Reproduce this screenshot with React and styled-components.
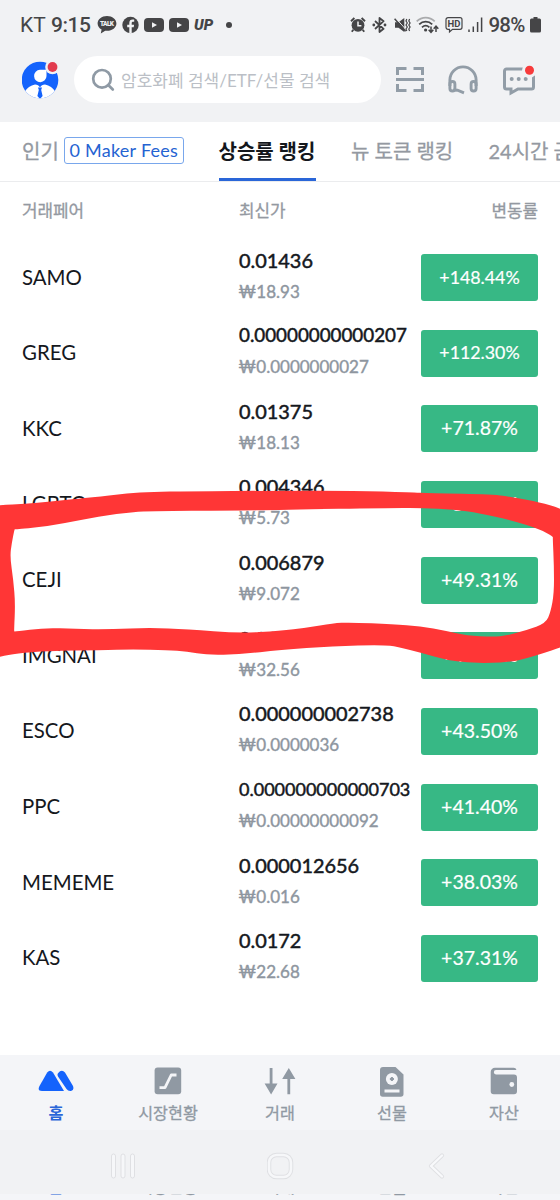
import React, { useState } from 'react'
import styled, { createGlobalStyle } from 'styled-components'

const coins = [
  { name: 'SAMO', price: '0.01436', krw: '18.93', change: '+148.44%' },
  { name: 'GREG', price: '0.00000000000207', krw: '0.0000000027', change: '+112.30%' },
  { name: 'KKC', price: '0.01375', krw: '18.13', change: '+71.87%' },
  { name: 'LGBTQ', price: '0.004346', krw: '5.73', change: '+50.32%' },
  { name: 'CEJI', price: '0.006879', krw: '9.072', change: '+49.31%' },
  { name: 'IMGNAI', price: '0.02469', krw: '32.56', change: '+45.12%' },
  { name: 'ESCO', price: '0.000000002738', krw: '0.0000036', change: '+43.50%' },
  { name: 'PPC', price: '0.000000000000703', krw: '0.00000000092', change: '+41.40%' },
  { name: 'MEMEME', price: '0.000012656', krw: '0.016', change: '+38.03%' },
  { name: 'KAS', price: '0.0172', krw: '22.68', change: '+37.31%' },
]

// ! long prices get a smaller font so they stay inside the column
const priceSize = (price) => {
  if (price.length > 16) return 18
  if (price.length > 14) return 18.8
  return 19.9
}

// ! status bar icons
const TalkIcon = () => (
  <svg width="20" height="20" viewBox="0 0 20 20">
    <path d="M10 1C4.700 1 .6 4.300 .6 8.500c0 2.600 1.600 4.800 4 6.100L3.800 18.500l4.400-2.800c.6.100 1.200.1 1.800.1 5.300 0 9.400-3.200 9.400-7.300S15.300 1 10 1z" fill="#454547" />
    <text x="10" y="11" textAnchor="middle" textLength="14" fontSize="6.500" fontWeight="900" fontFamily="Roboto, sans-serif" fill="#f1f2f4">TALK</text>
  </svg>
)

const FacebookIcon = () => (
  <svg width="17" height="18" viewBox="0 0 17 18">
    <circle cx="8.500" cy="9" r="8.200" fill="#454547" />
    <path d="M7.300 17.500V11.200H5.200V8.700h2.100V7c0-2.300 1.300-3.400 3.300-3.400.9 0 1.600.1 1.600.1v2.100h-1.100c-1.100 0-1.400.6-1.400 1.300v1.600h2.400l-.4 2.500h-2v6.300z" fill="#f1f2f4" />
  </svg>
)

const YoutubeIcon = () => (
  <svg width="20" height="16" viewBox="0 0 20 16">
    <rect x="0" y="1" width="20" height="14" rx="4" fill="#454547" />
    <path d="M8 5.200v5.600l5-2.800z" fill="#f1f2f4" />
  </svg>
)

const AlarmIcon = () => (
  <svg width="16" height="18" viewBox="0 0 16 18">
    <circle cx="8" cy="9.300" r="6.400" fill="#454547" />
    <path d="M1 5.200L4.400 2M15 5.200L11.600 2M3.300 13.800l-1.500 2M12.700 13.800l1.500 2" stroke="#454547" strokeWidth="1.900" />
    <path d="M8 5.600v4.200h3.400" stroke="#f1f2f4" strokeWidth="1.500" fill="none" />
  </svg>
)

const BluetoothIcon = () => (
  <svg width="17" height="18" viewBox="-1 0 17 18">
    <path d="M3 5l8.600 7.800L7.500 16V2l4.100 3.200L3 13" stroke="#454547" strokeWidth="1.800" fill="none" strokeLinejoin="round" />
    <circle cx="1.800" cy="9" r="1.400" fill="#454547" />
    <circle cx="13" cy="9" r="1.400" fill="#454547" />
  </svg>
)

const MuteIcon = () => (
  <svg width="17" height="18" viewBox="0 0 17 18">
    <path d="M1 6.200h3.500L10.300 2v14L4.500 11.800H1z" fill="#454547" />
    <path d="M1.500 1.800l11 12.500" stroke="#f1f2f4" strokeWidth="1" />
    <path d="M.6 2.800l11 12.500" stroke="#454547" strokeWidth="1.500" />
    <path d="M12.800 3l-.8 2 1.300 2-1.300 2 1.300 2-1.300 2 .8 2M15.600 3l-.8 2 1.300 2-1.300 2 1.300 2-1.300 2 .8 2" stroke="#454547" strokeWidth="1.200" fill="none" />
  </svg>
)

const WifiIcon = () => (
  <svg width="23" height="18" viewBox="0 0 23 18">
    <path d="M.7 5.300C5.800.3 13.600.3 18.700 5.300" stroke="#aaabad" strokeWidth="1.700" fill="none" />
    <path d="M3.200 8.300c3.700-3.500 9.300-3.500 13 0M6 11.300c2.200-2 5.200-2 7.400 0" stroke="#454547" strokeWidth="1.800" fill="none" />
    <circle cx="9.600" cy="14" r="1.600" fill="#454547" />
    <path d="M15 10.500v5.500M12.700 13.700l2.300 2.600 2.300-2.600M20 16v-5.500M17.700 12.800l2.300-2.600 2.300 2.600" stroke="#454547" strokeWidth="1.500" fill="none" />
  </svg>
)

const HdIcon = () => (
  <svg width="18" height="18" viewBox="0 0 18 18">
    <path d="M3 1.700h12a2 2 0 0 1 2 2v7.600a2 2 0 0 1-2 2H7.500L4.500 16v-2.700H3a2 2 0 0 1-2-2V3.700a2 2 0 0 1 2-2z" stroke="#454547" strokeWidth="1.200" fill="none" />
    <text x="9" y="11" textAnchor="middle" textLength="13" fontSize="9.500" fontWeight="700" fontFamily="Roboto, sans-serif" fill="#454547">HD</text>
  </svg>
)

const SignalIcon = () => (
  <svg width="15" height="18" viewBox="0 0 15 18">
    <path d="M1 13.500V16M5.300 10.500V16M9.600 6V16M13.600 1.500V16" stroke="#454547" strokeWidth="1.500" />
  </svg>
)

const BatteryIcon = () => (
  <svg width="11" height="18" viewBox="0 0 11 18">
    <path d="M3.500 1h4v1.600h2a1.500 1.500 0 0 1 1.500 1.500v11a1.500 1.500 0 0 1-1.500 1.500h-8A1.500 1.500 0 0 1 0 15.100v-11a1.500 1.500 0 0 1 1.500-1.500h2z" fill="#454547" />
  </svg>
)

// ! header icons
const AvatarIcon = () => (
  <svg width="38" height="38" viewBox="0 0 38 38">
    <defs>
      <clipPath id="avatar">
        <circle cx="18" cy="19" r="18.300" />
      </clipPath>
    </defs>
    <g clipPath="url(#avatar)">
      <rect width="38" height="38" fill="#1463fc" />
      <path d="M2 38V31.500Q6.500 24.500 13 23.500Q16.500 23.500 18 26.500Q19.500 23.500 23 23.500Q29.500 24.500 34 31.500V38z" fill="#fff" />
      <path d="M16 26.500h4l-.8 2.500 1.400 6-2.600 3-2.600-3 1.400-6z" fill="#1463fc" />
    </g>
    <path d="M18 8.800H24.500V15A6.200 6.200 0 1 1 18 8.800z" fill="#fff" />
    <circle cx="30.500" cy="6" r="7.300" fill="#f1f2f4" />
    <circle cx="30.500" cy="6" r="4.900" fill="#e23b4e" />
  </svg>
)

const SearchIcon = () => (
  <svg width="24" height="24" viewBox="0 0 24 24" fill="none" stroke="#8f9aa5" strokeWidth="2.700" strokeLinecap="round">
    <circle cx="11" cy="10.800" r="8.800" />
    <path d="M17.500 17.200l4.300 4.300" />
  </svg>
)

const ScanIcon = () => (
  <svg width="28" height="27" viewBox="0 0 28 27" fill="none" stroke="#929da7" strokeWidth="3">
    <path d="M1.500 9V2.500h9M17.500 2.500h9V9M1.500 18v6.500h9M17.500 24.500h9V18M0 13.500h28" />
  </svg>
)

const HeadsetIcon = () => (
  <svg width="30" height="30" viewBox="0 0 30 30" fill="none" stroke="#929da7" strokeWidth="2.900">
    <path d="M1.900 21V15a13.100 13.100 0 0 1 26.200 0v6" />
    <rect x="1.900" y="16.500" width="5" height="9.500" rx="2.500" />
    <rect x="23.100" y="16.500" width="5" height="9.500" rx="2.500" />
    <path d="M5.500 25l4 .2 6.500 2.600" />
  </svg>
)

const MessageIcon = () => (
  <svg width="34" height="32" viewBox="0 0 34 32">
    <path d="M4.500 5h25a2 2 0 0 1 2 2v16a2 2 0 0 1-2 2H16l-7 4V25H4.500a2 2 0 0 1-2-2V7a2 2 0 0 1 2-2z" fill="none" stroke="#929da7" strokeWidth="3" />
    <g fill="#929da7">
      <circle cx="9.700" cy="15" r="2" />
      <circle cx="16.700" cy="15" r="2" />
      <circle cx="23.700" cy="15" r="2" />
    </g>
    <circle cx="27.500" cy="6.300" r="7.500" fill="#f1f2f4" />
    <circle cx="27.500" cy="6.300" r="4.500" fill="#f73b3b" />
  </svg>
)

// ! bottom menu icons
const HomeIcon = () => (
  <svg width="36" height="30" viewBox="0 0 36 30" fill="#1463fc">
    <path d="M9.200 6.600Q12 3 15 6.600L26 25H4Q-1 25 1.500 20z" />
    <path d="M20 7.300Q23.700 2.800 27 6.600L35 20q1.500 4-2 5-3 .3-4.500-2L20 10.500q-1-1.700 0-3.200z" />
  </svg>
)

const MarketIcon = () => (
  <svg width="28" height="30" viewBox="0 0 28 30">
    <rect x=".6" y="1.600" width="26.600" height="26.600" rx="3" fill="#9099a3" />
    <path d="M5.500 21.600H11L17.200 9H22.500" fill="none" stroke="#f4f5f8" strokeWidth="2.800" strokeLinejoin="round" />
  </svg>
)

const TradeIcon = () => (
  <svg width="32" height="30" viewBox="0 0 32 30" fill="#9099a3">
    <path d="M5.700 2h2.800v15.500h5L7.100 28.400 .6 17.500h5.100zM23.400 28.200h2.800V13h5.200L24.800 2 18.200 13h5.200z" />
  </svg>
)

const FuturesIcon = () => (
  <svg width="26" height="32" viewBox="0 0 26 32">
    <path d="M4 1h12.500l8 7.500V28a2.700 2.700 0 0 1-2.700 2.700H3.700A2.700 2.700 0 0 1 1 28V4a3 3 0 0 1 3-3z" fill="#9099a3" />
    <circle cx="12.900" cy="13" r="6" fill="#f4f5f8" />
    <path d="M12.900 11l2 2-2 2-2-2z" fill="#9099a3" stroke="#9099a3" strokeLinejoin="round" />
    <path d="M5.500 25h15" stroke="#f4f5f8" strokeWidth="3" />
  </svg>
)

const WalletIcon = () => (
  <svg width="28" height="30" viewBox="0 0 28 30">
    <path d="M5 1.800h18.500a3 3 0 0 1 3 2.300H6a1.900 1.900 0 0 0 0 4.300h18a3 3 0 0 1 3 3v13.800a3 3 0 0 1-3 3H3.700a3 3 0 0 1-3-3V6a4.200 4.200 0 0 1 4.300-4.200z" fill="#9099a3" />
    <circle cx="21.800" cy="18.500" r="2.400" fill="#f4f5f8" />
  </svg>
)

const menus = [
  { label: '홈', Icon: HomeIcon },
  { label: '시장현황', Icon: MarketIcon },
  { label: '거래', Icon: TradeIcon },
  { label: '선물', Icon: FuturesIcon },
  { label: '자산', Icon: WalletIcon },
]

// ! hand drawn circle around one row of the list
const outerLine = [
  [-20, 28], [0, 25], [25, 24], [50, 21.7], [80, 18.5], [100, 16.5], [127, 13.5], [153, 11.7], [187, 11.3], [280, 10.7],
  [355, 10.7], [410, 12.3], [430, 13.2], [493, 14.2], [513, 17.3], [540, 22.3], [560, 28.3], [580, 38],
  [580, 160], [560, 167.7], [543, 173.3], [527, 178.3], [510, 182], [490, 183], [467, 182.7], [447, 180],
  [423, 173.3], [397, 166.7], [383, 165], [333, 166], [280, 170], [240, 174.3], [207, 175], [187, 171.7],
  [167, 170], [133, 169.3], [100, 170], [47, 171], [17, 173.3], [0, 176.7], [-20, 182],
]

const innerLine = [
  [14.5, 49.3], [15, 49.3], [50, 46], [80, 40], [117, 33.3], [150, 31], [233, 30.7], [280, 30], [397, 27.7], [423, 28.3],
  [453, 29.3], [480, 33.3], [513, 40.7], [540, 49.3], [553, 56.7], [552.7, 57.5], [554, 86.7], [554, 113.3],
  [550.7, 131.7], [545.7, 143.3], [526.7, 150], [506.7, 155.7], [493.3, 156.7], [466.7, 155.7], [446.7, 151],
  [420, 146], [393, 144.3], [350, 142.3], [333, 143.3], [307, 147.7], [280, 150.7], [240, 153.3], [187, 149.3],
  [150, 147.7], [110, 149.3], [75, 149], [45, 147.7], [14.5, 151.7], [14, 151], [15.3, 123.3], [13.3, 100], [10, 76.7], [11.7, 63.3],
]

// curve through the middle of every two points
const smooth = (points) => {
  const last = points[points.length - 1]
  const start = [(last[0] + points[0][0]) / 2, (last[1] + points[0][1]) / 2]
  const curves = points.map(([x, y], i) => {
    const next = points[(i + 1) % points.length]
    return `Q${x} ${y} ${(x + next[0]) / 2} ${(y + next[1]) / 2}`
  })
  return `M${start[0]} ${start[1]}${curves.join('')}Z`
}

const Marker = () => (
  <MarkerStyled width="560" height="190" viewBox="0 0 560 190">
    <path fillRule="evenodd" fill="#ff3636" d={smooth(outerLine) + smooth(innerLine)} />
  </MarkerStyled>
)

const App = () => {
  const [active, setActive] = useState('홈')

  const renderCoins = () => {
    return coins.map((coin, i) => {
      return (
        <Row key={i}>
          <Name>{coin.name}</Name>
          <PriceBox>
            <Price $size={priceSize(coin.price)}>{coin.price}</Price>
            <Krw>₩<span>{coin.krw}</span></Krw>
          </PriceBox>
          <Change $small={coin.change.length > 7}>{coin.change}</Change>
        </Row>
      )
    })
  }

  return (
    <>
      <GlobalStyle />
      <Screen>
        <StatusBar>
          <StatusGroup>
            <Carrier>KT</Carrier>
            <Clock>9:15</Clock>
            <TalkIcon />
            <FacebookIcon />
            <YoutubeIcon />
            <YoutubeIcon />
            <UpMark>UP</UpMark>
            <Dot />
          </StatusGroup>
          <StatusGroup $right>
            <AlarmIcon />
            <BluetoothIcon />
            <MuteIcon />
            <WifiIcon />
            <HdIcon />
            <SignalIcon />
            <Percent>98%</Percent>
            <BatteryIcon />
          </StatusGroup>
        </StatusBar>

        <Header>
          <AvatarIcon />
          <SearchBox>
            <SearchIcon />
            <span>암호화폐 검색/ETF/선물 검색</span>
          </SearchBox>
          <HeaderIcons>
            <ScanIcon />
            <HeadsetIcon />
            <MessageIcon />
          </HeaderIcons>
        </Header>

        <Tabs>
          <Tab $width={161}>인기<Fee>0 Maker Fees</Fee></Tab>
          <Tab $width={97} $active>상승률 랭킹</Tab>
          <Tab $width={102}>뉴 토큰 랭킹</Tab>
          <Tab $width={160}>24시간 금액</Tab>
        </Tabs>

        <ListHead>
          <span>거래페어</span>
          <span>최신가</span>
          <span>변동률</span>
        </ListHead>

        <List>
          {renderCoins()}
          <Marker />
        </List>

        <Menu>
          {menus.map(({ label, Icon }) => (
            <MenuItem key={label} onClick={() => setActive(label)}>
              <Icon />
              <MenuLabel $active={active === label}>{label}</MenuLabel>
            </MenuItem>
          ))}
        </Menu>

        <SystemBar>
          <svg width="26" height="28" viewBox="0 0 26 28" fill="#f6f7f9" stroke="#dfe0e3">
            <rect x="1.500" y="2" width="4" height="24" rx="2" />
            <rect x="11" y="2" width="4" height="24" rx="2" />
            <rect x="20.500" y="2" width="4" height="24" rx="2" />
          </svg>
          <svg width="28" height="28" viewBox="0 0 28 28" fill="none">
            <rect x="2" y="3" width="22" height="22" rx="7.500" stroke="#dfe0e3" strokeWidth="4.500" />
            <rect x="2" y="3" width="22" height="22" rx="7.500" stroke="#f6f7f9" strokeWidth="2.600" />
          </svg>
          <svg width="20" height="28" viewBox="0 0 20 28" fill="none" strokeLinecap="round" strokeLinejoin="round">
            <path d="M16 3.500L5 14l11 10.500" stroke="#dfe0e3" strokeWidth="4.200" />
            <path d="M16 3.500L5 14l11 10.500" stroke="#f8f9fb" strokeWidth="2.400" />
          </svg>
        </SystemBar>

        <MenuEdge>
          {menus.map(({ label }) => (
            <MenuItem key={label}>
              <MenuLabel $active={active === label}>{label}</MenuLabel>
            </MenuItem>
          ))}
        </MenuEdge>
      </Screen>
    </>
  )
}

const GlobalStyle = createGlobalStyle`
  * {
    box-sizing: border-box;
  }

  body {
    margin: 0;
    background: #fff;
  }

  svg {
    display: block;
    flex-shrink: 0;
  }
`

const Screen = styled.div`
  width: 560px;
  height: 1200px;
  display: flex;
  flex-direction: column;
  overflow: hidden;
  background: #fff;
  font-family: Lato, 'Noto Sans CJK KR', sans-serif;
`

const StatusBar = styled.div`
  height: 50px;
  flex-shrink: 0;
  padding: 0 19px 0 20px;
  display: flex;
  justify-content: space-between;
  background: #f1f2f4;
  color: #454547;
  font-family: Roboto, sans-serif;
`

const StatusGroup = styled.div`
  display: flex;
  align-items: center;
  gap: ${({ $right }) => ($right ? '5.5px' : '5px')};
`

const Carrier = styled.span`
  width: 26px;
  font-size: 21px;
`

const Clock = styled.span`
  width: 41px;
  font-size: 21px;
  font-weight: 500;
  letter-spacing: -.5px;
`

const UpMark = styled.span`
  width: 22px;
  font-size: 15px;
  font-weight: 900;
  font-style: italic;
`

const Dot = styled.i`
  width: 6px;
  height: 6px;
  margin-left: 5px;
  border-radius: 50%;
  background: #454547;
`

const Percent = styled.span`
  width: 36px;
  font-size: 20.5px;
  font-weight: 500;
  letter-spacing: -.8px;
`

const Header = styled.div`
  height: 72px;
  flex-shrink: 0;
  padding: 0 24px 13px 22px;
  display: flex;
  align-items: center;
  background: #f1f2f4;
`

const SearchBox = styled.div`
  width: 307px;
  height: 47px;
  margin-left: 14px;
  padding-left: 17px;
  display: flex;
  align-items: center;
  gap: 6px;
  border-radius: 24px;
  background: #fff;
  color: #bbbfc6;
  font-size: 17px;
  white-space: nowrap;
`

const HeaderIcons = styled.div`
  flex: 1;
  margin-left: 15px;
  display: flex;
  align-items: center;
  justify-content: space-between;
`

const Tabs = styled.div`
  height: 60px;
  flex-shrink: 0;
  padding-left: 22px;
  display: flex;
  gap: 35.5px;
  border-bottom: 1px solid #ebecee;
  overflow: hidden;
`

const Tab = styled.div`
  width: ${({ $width }) => $width}px;
  height: 59px;
  flex-shrink: 0;
  display: flex;
  align-items: center;
  white-space: nowrap;
  font-size: 20px;
  font-weight: ${({ $active }) => ($active ? 700 : 400)};
  color: ${({ $active }) => ($active ? '#14171c' : '#9499a1')};
  -webkit-text-stroke: ${({ $active }) => ($active ? 0 : '.3px')};
  border-bottom: 3px solid ${({ $active }) => ($active ? '#2a66d8' : 'transparent')};
`

const Fee = styled.span`
  width: 120px;
  height: 27px;
  margin-left: 5px;
  flex-shrink: 0;
  display: flex;
  align-items: center;
  justify-content: center;
  border: 1px solid #79a7ec;
  border-radius: 3px;
  color: #2563d2;
  font-size: 18px;
  letter-spacing: .25px;
  -webkit-text-stroke: 0;
`

const ListHead = styled.div`
  height: 57.7px;
  flex-shrink: 0;
  padding: 0 22px 3px;
  display: grid;
  grid-template-columns: 217px 1fr auto;
  align-items: center;
  color: #9499a1;
  font-size: 16.9px;
  -webkit-text-stroke: .3px;
`

const List = styled.div`
  position: relative;
  height: 815.3px;
  flex-shrink: 0;
`

const Row = styled.div`
  height: 75.67px;
  padding: 0 22px;
  display: grid;
  grid-template-columns: 217px minmax(0, 1fr) 117px;
  align-items: center;
`

const Name = styled.span`
  padding-bottom: 2px;
  color: #15181d;
  font-size: 20.4px;
`

const PriceBox = styled.div`
  padding-bottom: 4px;
  display: flex;
  flex-direction: column;
  gap: 8px;
  white-space: nowrap;
`

const Price = styled.span`
  color: #15181d;
  font-size: ${({ $size }) => $size}px;
  line-height: 24px;
  -webkit-text-stroke: .5px;
`

const Krw = styled.span`
  margin-left: -.7px;
  color: #8e969f;
  font-size: 17px;
  line-height: 24px;
  -webkit-text-stroke: .4px;
`

const Change = styled.div`
  height: 47px;
  padding-bottom: 2px;
  display: flex;
  align-items: center;
  justify-content: center;
  border-radius: 3px;
  background: #37b885;
  color: #fff;
  font-size: ${({ $small }) => ($small ? '17.8px' : '19.5px')};
  -webkit-text-stroke: .2px;
`

const MarkerStyled = styled.svg`
  position: absolute;
  top: 240.3px;
  left: 0;
  pointer-events: none;
`

const Menu = styled.div`
  height: 75px;
  flex-shrink: 0;
  display: flex;
  background: #f4f5f8;
`

const MenuItem = styled.div`
  flex: 1;
  padding-top: 11px;
  display: flex;
  flex-direction: column;
  align-items: center;
  justify-content: space-between;
`

const MenuLabel = styled.span`
  height: 27px;
  font-size: 16.2px;
  line-height: 20px;
  font-weight: ${({ $active }) => ($active ? 700 : 400)};
  color: ${({ $active }) => ($active ? '#2a66d8' : '#9099a3')};
  -webkit-text-stroke: ${({ $active }) => ($active ? 0 : '.3px')};
`

const SystemBar = styled.div`
  height: 64px;
  flex-shrink: 0;
  padding: 8px 114px 0 110px;
  display: flex;
  align-items: center;
  justify-content: space-between;
  background: #f1f2f4;
`

// thin strip where only the bottom of the labels is visible
const MenuEdge = styled.div`
  height: 6px;
  flex-shrink: 0;
  display: flex;
  align-items: flex-start;
  overflow: hidden;
  background: #f4f5f8;

  ${MenuItem} {
    margin-top: -17px;
    padding-top: 0;
  }
`

export default App
